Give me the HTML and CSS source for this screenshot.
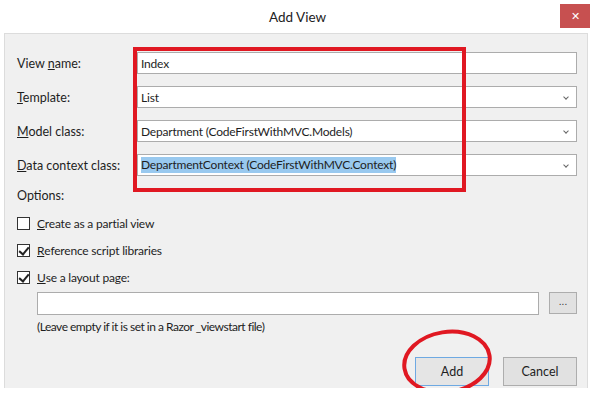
FILE: index.html
```html
<!DOCTYPE html>
<html lang="en">
<head>
    <meta charset="UTF-8">
    <title>Add View</title>
    <link rel="stylesheet" href="styles.css">
</head>
<body>
    <div class="titlebar">
        <span class="title">Add View</span>
        <button class="close">&#x2715;</button>
    </div>
    <div class="panel">
        <div class="field-row">
            <label>View <u>n</u>ame:</label>
            <div class="box">Index</div>
        </div>
        <div class="field-row">
            <label><u>T</u>emplate:</label>
            <div class="box select">List<span class="chev"></span></div>
        </div>
        <div class="field-row">
            <label><u>M</u>odel class:</label>
            <div class="box select">Department (CodeFirstWithMVC.Models)<span class="chev"></span></div>
        </div>
        <div class="field-row">
            <label><u>D</u>ata context class:</label>
            <div class="box select"><span class="selected">DepartmentContext (CodeFirstWithMVC.Context)</span><span class="chev"></span></div>
        </div>

        <div class="options">Options:</div>
        <div class="check-row"><span class="check"></span><u>C</u>reate as a partial view</div>
        <div class="check-row"><span class="check on"></span><u>R</u>eference script libraries</div>
        <div class="check-row"><span class="check on"></span><u>U</u>se a layout page:</div>

        <div class="layout-row">
            <div class="box path"></div>
            <button class="browse">...</button>
        </div>
        <div class="hint">(Leave empty if it is set in a Razor _viewstart file)</div>

        <div class="actions">
            <button class="btn default">Add</button>
            <button class="btn">Cancel</button>
        </div>

        <!-- annotations drawn over the dialog -->
        <div class="mark-rect"></div>
        <svg class="mark-ellipse" width="96" height="72" viewBox="0 0 96 72">
            <ellipse cx="47" cy="36" rx="43" ry="30" transform="rotate(-9 47 36)" fill="none" stroke="#e01822" stroke-width="4"/>
        </svg>
    </div>
</body>
</html>
```

FILE: styles.css
```css
body {
    margin: 0;
    background: #fff;
    font-family: Lato, "Noto Sans", sans-serif;
    font-size: 12px;
    letter-spacing: -0.2px;
    color: #1e1e1e;
}
.titlebar {
    position: relative;
    height: 33px;
    display: flex;
    align-items: center;
    justify-content: center;
}
.title {
    font-size: 13.5px;
    letter-spacing: 0;
    color: #222;
    margin-left: 2px;
}
.close {
    position: absolute;
    right: 3px;
    top: 4px;
    width: 30px;
    height: 24px;
    border: none;
    background: #c75050;
    color: #fff;
    font-size: 11px;
    padding: 0;
}
.panel {
    position: relative;
    margin: 0 5px 0 4px;
    height: 355px;
    box-sizing: border-box;
    border: 1px solid #dcdcdc;
    border-bottom: none;
    background: #f0f0f0;
    padding: 18px 10px 0 12px;
}
.field-row {
    display: flex;
    align-items: center;
    height: 22px;
    margin-bottom: 12px;
}
.field-row label {
    width: 120px;
    flex: none;
    font-size: 12.5px;
    letter-spacing: 0;
}
.box {
    flex: 1;
    height: 22px;
    box-sizing: border-box;
    border: 1px solid #acacac;
    background: #fff;
    display: flex;
    align-items: center;
    padding-left: 3px;
    position: relative;
}
.chev {
    position: absolute;
    right: 8px;
    top: 8px;
    width: 3px;
    height: 3px;
    border-right: 1px solid #666;
    border-bottom: 1px solid #666;
    transform: rotate(45deg);
}
.selected {
    background: #99c9ef;
    line-height: 16px;
}
.options {
    height: 16px;
    line-height: 16px;
    margin-bottom: 6px;
    font-size: 12.5px;
    letter-spacing: 0;
}
.check-row {
    display: flex;
    align-items: center;
    height: 27px;
}
.check {
    width: 13px;
    height: 13px;
    box-sizing: border-box;
    border: 1px solid #333;
    background: #fff;
    margin-right: 7px;
    position: relative;
}
.check.on::after {
    content: "";
    position: absolute;
    left: 3px;
    top: 0px;
    width: 4px;
    height: 8px;
    border-right: 2px solid #222;
    border-bottom: 2px solid #222;
    transform: rotate(40deg);
}
.layout-row {
    display: flex;
    margin-left: 20px;
    margin-top: 1px;
    gap: 10px;
}
.path {
    height: 23px;
}
.browse {
    width: 28px;
    height: 22px;
    border: 1px solid #adadad;
    background: #e1e1e1;
    font-size: 10px;
    padding: 0 0 4px;
    color: #333;
}
.hint {
    margin-left: 20px;
    height: 16px;
    line-height: 16px;
    margin-top: 4px;
    letter-spacing: -0.5px;
}
.actions {
    display: flex;
    justify-content: flex-end;
    gap: 14px;
    margin-top: 22px;
}
.btn {
    width: 74px;
    height: 29px;
    border: 1px solid #adadad;
    background: #e1e1e1;
    font-family: Lato, "Noto Sans", sans-serif;
    font-size: 12.5px;
    color: #1e1e1e;
}
.btn.default {
    border-color: #6ea9e2;
    background: #e5e5e5;
}
.mark-rect {
    position: absolute;
    left: 128px;
    top: 13px;
    width: 333px;
    height: 145px;
    box-sizing: border-box;
    border: 4px solid #e01822;
}
.mark-ellipse {
    position: absolute;
    left: 395px;
    top: 292px;
    overflow: visible;
}
```
